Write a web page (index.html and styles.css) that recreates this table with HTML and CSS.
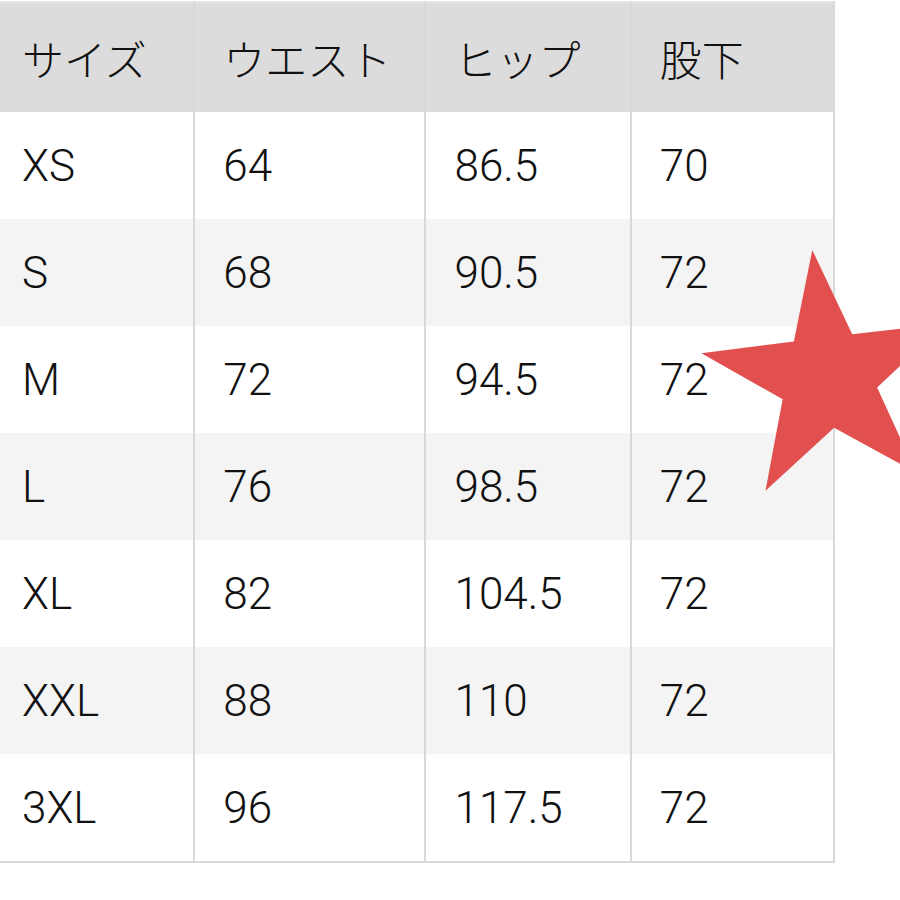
FILE: index.html
```html
<!DOCTYPE html>
<html lang="ja">
<head>
<meta charset="utf-8">
<link rel="stylesheet" href="styles.css">
</head>
<body>
<div class="wrap">
  <table class="size-table">
    <colgroup>
      <col class="c1"><col class="c2"><col class="c3"><col class="c4">
    </colgroup>
    <thead>
      <tr><th>サイズ</th><th>ウエスト</th><th>ヒップ</th><th>股下</th></tr>
    </thead>
    <tbody>
      <tr><td>XS</td><td>64</td><td>86.5</td><td>70</td></tr>
      <tr><td>S</td><td>68</td><td>90.5</td><td>72</td></tr>
      <tr><td>M</td><td>72</td><td>94.5</td><td>72</td></tr>
      <tr><td>L</td><td>76</td><td>98.5</td><td>72</td></tr>
      <tr><td>XL</td><td>82</td><td>104.5</td><td>72</td></tr>
      <tr><td>XXL</td><td>88</td><td>110</td><td>72</td></tr>
      <tr><td>3XL</td><td>96</td><td>117.5</td><td>72</td></tr>
    </tbody>
  </table>
  <svg class="star" width="260" height="260" viewBox="-130 -130 260 260" aria-hidden="true">
    <polygon transform="rotate(-7)" fill="#e1504f" points="0,-129 29.4,-40.5 122.7,-39.9 47.6,15.5 75.8,104.4 0,50 -75.8,104.4 -47.6,15.5 -122.7,-39.9 -29.4,-40.5"/>
  </svg>
</div>
</body>
</html>
```

FILE: styles.css
```css
html, body {
  margin: 0;
  padding: 0;
  background: #ffffff;
}
.wrap {
  position: relative;
  width: 900px;
  height: 900px;
  overflow: hidden;
}
.size-table {
  margin-top: 1px;
  border-collapse: collapse;
  table-layout: fixed;
  width: 835px;
  font-family: Roboto, "Noto Sans CJK JP", sans-serif;
  font-weight: 300;
  color: #111;
}
.c1 { width: 194px; }
.c2 { width: 231px; }
.c3 { width: 205px; }
.c4 { width: 203px; }
.size-table th,
.size-table td {
  padding: 0 0 0 28px;
  text-align: left;
  vertical-align: middle;
  border-right: 2px solid #d9d9d9;
}
.size-table th:first-child,
.size-table td:first-child {
  padding-left: 22px;
}
.size-table thead tr {
  border-top: 2px solid #e6e6e6;
}
.size-table th {
  height: 109px;
  background: #dcdcdc;
  font-family: "Noto Sans CJK JP", sans-serif;
  font-weight: 300;
  font-size: 42px;
}
.size-table td {
  height: 107px;
  font-size: 44px;
}
.size-table tbody tr:nth-child(even) td {
  background: #f4f4f4;
}
.size-table tbody tr:last-child td {
  border-bottom: 2px solid #d9d9d9;
}
.star {
  position: absolute;
  left: 698px;
  top: 248px;
}
```
